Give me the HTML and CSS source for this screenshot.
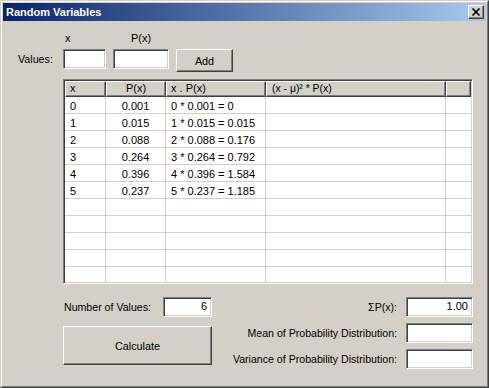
FILE: index.html
```html
<!DOCTYPE html>
<html>
<head>
<meta charset="utf-8">
<title>Random Variables</title>
<link rel="stylesheet" href="styles.css">
</head>
<body>
<div class="window">
  <div class="frame">
    <div class="titlebar">
      <span class="title">Random Variables</span>
      <div class="close">
        <svg width="14" height="12" viewBox="0 0 14 12">
          <path d="M3.5 2.5 L10.5 9.5 M10.5 2.5 L3.5 9.5" stroke="#000" stroke-width="1.7" fill="none"/>
        </svg>
      </div>
    </div>
    <div class="client">
      <div class="col-labels">
        <span class="lbl-x">x</span>
        <span class="lbl-px">P(x)</span>
      </div>
      <div class="values-row">
        <span class="values-label">Values:</span>
        <div class="field f-x"></div>
        <div class="field f-px"></div>
        <div class="btn add">Add</div>
      </div>

      <div class="grid">
        <div class="row head">
          <div class="hc">x</div>
          <div class="hc center">P(x)</div>
          <div class="hc">x . P(x)</div>
          <div class="hc narrow">(x - μ)² * P(x)</div>
          <div class="hc last"></div>
        </div>
        <div class="row"><div class="c">0</div><div class="c center">0.001</div><div class="c">0 * 0.001 = 0</div><div class="c"></div><div class="c last"></div></div>
        <div class="row"><div class="c">1</div><div class="c center">0.015</div><div class="c">1 * 0.015 = 0.015</div><div class="c"></div><div class="c last"></div></div>
        <div class="row"><div class="c">2</div><div class="c center">0.088</div><div class="c">2 * 0.088 = 0.176</div><div class="c"></div><div class="c last"></div></div>
        <div class="row"><div class="c">3</div><div class="c center">0.264</div><div class="c">3 * 0.264 = 0.792</div><div class="c"></div><div class="c last"></div></div>
        <div class="row"><div class="c">4</div><div class="c center">0.396</div><div class="c">4 * 0.396 = 1.584</div><div class="c"></div><div class="c last"></div></div>
        <div class="row"><div class="c">5</div><div class="c center">0.237</div><div class="c">5 * 0.237 = 1.185</div><div class="c"></div><div class="c last"></div></div>
        <div class="row"><div class="c"></div><div class="c"></div><div class="c"></div><div class="c"></div><div class="c last"></div></div>
        <div class="row"><div class="c"></div><div class="c"></div><div class="c"></div><div class="c"></div><div class="c last"></div></div>
        <div class="row"><div class="c"></div><div class="c"></div><div class="c"></div><div class="c"></div><div class="c last"></div></div>
        <div class="row"><div class="c"></div><div class="c"></div><div class="c"></div><div class="c"></div><div class="c last"></div></div>
        <div class="row"><div class="c"></div><div class="c"></div><div class="c"></div><div class="c"></div><div class="c last"></div></div>
      </div>

      <div class="bottom">
        <div class="left-col">
          <div class="count-row">
            <span class="lbl">Number of Values:</span>
            <div class="field f-count">6</div>
          </div>
          <div class="btn calc">Calculate</div>
        </div>
        <div class="right-col">
          <div class="stat-row"><span class="lbl">ΣP(x):</span><div class="field f-stat">1.00</div></div>
          <div class="stat-row"><span class="lbl">Mean of Probability Distribution:</span><div class="field f-stat"></div></div>
          <div class="stat-row"><span class="lbl">Variance of Probability Distribution:</span><div class="field f-stat"></div></div>
        </div>
      </div>
    </div>
  </div>
</div>
</body>
</html>
```

FILE: styles.css
```css
html, body {
  margin: 0;
  padding: 0;
  background: #d4d0c8;
}

body {
  font-family: "Liberation Sans", Arial, sans-serif;
  font-size: 11px;
  color: #000;
}

.window {
  width: 489px;
  height: 388px;
  box-sizing: border-box;
  background: #d4d0c8;
  border: 1px solid;
  border-color: #d4d0c8 #404040 #404040 #d4d0c8;
}

.frame {
  height: 100%;
  box-sizing: border-box;
  border: 1px solid;
  border-color: #ffffff #808080 #808080 #ffffff;
  padding: 1px;
}

.titlebar {
  height: 18px;
  box-sizing: border-box;
  background: linear-gradient(to right, #0a246a, #a6caf0);
  display: flex;
  align-items: center;
  justify-content: space-between;
  padding: 0 2px 0 3px;
}

.title {
  color: #ffffff;
  font-weight: bold;
  font-size: 11px;
  line-height: 13px;
}

.close {
  width: 16px;
  height: 14px;
  box-sizing: border-box;
  background: #d4d0c8;
  border: 1px solid;
  border-color: #ffffff #404040 #404040 #ffffff;
  box-shadow: inset -1px -1px #808080;
  display: flex;
}

.close svg {
  display: block;
}

.client {
  display: flex;
  flex-direction: column;
}

.col-labels {
  display: flex;
  margin-top: 11px;
  padding-left: 60px;
  height: 13px;
  line-height: 13px;
}

.lbl-x {
  width: 43px;
  padding-left: 2px;
  box-sizing: border-box;
}

.lbl-px {
  width: 56px;
  margin-left: 7px;
  text-align: center;
}

.values-row {
  display: flex;
  align-items: flex-start;
  margin-top: 4px;
  padding-left: 15px;
  gap: 7px;
}

.values-label {
  width: 38px;
  height: 20px;
  line-height: 20px;
  font-size: 10.7px;
}

.lbl {
  font-size: 10.6px;
}

.field {
  height: 20px;
  box-sizing: border-box;
  background: #ffffff;
  border: 1px solid;
  border-color: #808080 #ffffff #ffffff #808080;
  box-shadow: inset 1px 1px #404040, inset -1px -1px #d4d0c8;
  line-height: 17px;
  padding: 0 4px;
  text-align: right;
}

.f-x { width: 43px; }
.f-px { width: 56px; }
.f-count { width: 49px; }
.f-stat { width: 67px; }

.btn {
  box-sizing: border-box;
  background: #d4d0c8;
  border: 1px solid;
  border-color: #ffffff #404040 #404040 #ffffff;
  box-shadow: inset -1px -1px #808080;
  display: flex;
  align-items: center;
  justify-content: center;
  font-size: 10.8px;
}

.add {
  width: 57px;
  height: 23px;
  padding-top: 1px;
}

.grid {
  margin-top: 7px;
  margin-left: 60px;
  width: 410px;
  height: 205px;
  box-sizing: border-box;
  border: 1px solid;
  border-color: #808080 #ffffff #ffffff #808080;
  box-shadow: inset 1px 1px #404040, inset -1px -1px #d4d0c8;
  padding: 1px;
  background: #ffffff;
  overflow: hidden;
}

.row {
  display: grid;
  grid-template-columns: 41px 60px 100px 180px 25px;
}

.hc {
  height: 16px;
  box-sizing: border-box;
  background: #d4d0c8;
  border-top: 1px solid #ffffff;
  border-left: 1px solid #ffffff;
  border-right: 1px solid #404040;
  border-bottom: 1px solid #404040;
  box-shadow: inset -1px -1px #808080;
  line-height: 13px;
  padding-left: 4px;
  white-space: nowrap;
  overflow: hidden;
}

.hc.narrow {
  font-size: 10.4px;
  padding-left: 5px;
}

.c {
  height: 17px;
  box-sizing: border-box;
  border-right: 1px solid #d4d0c8;
  border-bottom: 1px solid #d4d0c8;
  padding: 2px 0 0 5px;
  line-height: 14px;
  white-space: nowrap;
}

.hc.center,
.c.center {
  text-align: center;
  padding-left: 0;
}

.c.last {
  border-right: none;
}

.bottom {
  display: flex;
  justify-content: space-between;
  margin-top: 13px;
  padding-left: 60px;
  padding-right: 13px;
}

.left-col {
  display: flex;
  flex-direction: column;
  gap: 9px;
  width: 149px;
}

.count-row {
  display: flex;
  align-items: center;
  justify-content: space-between;
  padding-left: 1px;
}

.calc {
  width: 149px;
  height: 39px;
}

.right-col {
  display: flex;
  flex-direction: column;
  gap: 6px;
}

.stat-row {
  display: flex;
  align-items: center;
  justify-content: flex-end;
  gap: 9px;
}
```
